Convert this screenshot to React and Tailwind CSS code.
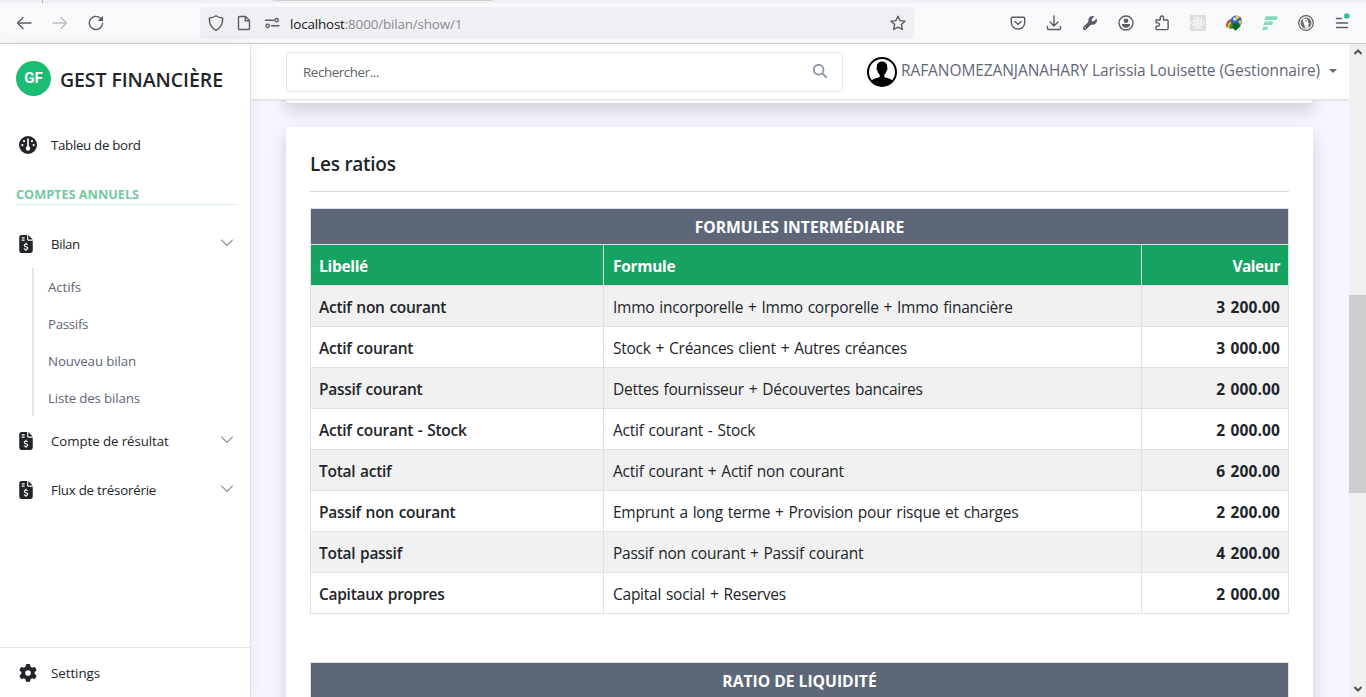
import { FaFileInvoiceDollar, FaGauge, FaGear, FaMagnifyingGlass, FaWrench, FaReact } from "react-icons/fa6";

const line = { fill: "none", stroke: "currentColor", strokeWidth: 1.4, strokeLinecap: "round", strokeLinejoin: "round" };

function Icon({ children, className = "size-4" }) {
  return (
    <svg viewBox="0 0 16 16" className={`${className} shrink-0`} {...line}>
      {children}
    </svg>
  );
}

function BrowserBar() {
  return (
    <div className="h-11 shrink-0 flex flex-col bg-[#f9f9fb] border-b border-[#cccccc] text-[#5b5b66]">
      <div className="h-[3px] shrink-0 bg-[#f0f0f4] flex">
        <div className="w-[43px] border-r border-[#b5b5b9]" />
        <div className="ml-[230px] w-[220px] h-px bg-[#cfcfd4]" />
      </div>
      <div className="flex-1 flex items-center">
        <div className="flex items-center gap-5 pl-4 w-[200px]">
          <Icon><path d="M15 8H1.5M7 2.5 1.5 8 7 13.5" /></Icon>
          <Icon className="size-4 text-[#bcbcc2]"><path d="M1 8h13.500M9 2.500 14.500 8 9 13.500" /></Icon>
          <Icon>
            <path d="M14.500 8.500a6.600 6.600 0 1 1-2-5.300" />
            <path d="M15 .8v5.200H9.800z" fill="currentColor" stroke="none" />
          </Icon>
        </div>
        <div className="h-8 w-[714px] rounded bg-[#f0f0f4] flex items-center px-2">
          <Icon><path d="M8 .8c2 1.400 4.200 2 6.600 2.200.4 5.500-1.500 9.700-6.600 12.300C2.900 12.700 1 8.500 1.400 3 3.800 2.800 6 2.200 8 .8z" /></Icon>
          <Icon className="size-4 ml-3"><path d="M3.500 1.500h6l4 4v8a1 1 0 0 1-1 1h-9a1 1 0 0 1-1-1v-11a1 1 0 0 1 1-1zM9.300 1.700v4h4" /></Icon>
          <Icon className="size-4 ml-3">
            <path d="M1.500 5.200h8M7.500 10.800h7.500" />
            <circle cx="12.600" cy="5.200" r="1.700" />
            <circle cx="3.600" cy="10.800" r="1.700" />
          </Icon>
          <span className="ml-2.5 pt-[3px] flex-1 text-[13.400px] tracking-[-0.15px] text-[#8a8a92] whitespace-nowrap">
            <span className="text-[#15141a]">localhost</span>:8000/bilan/show/1
          </span>
          <Icon className="size-4"><path d="m8 1.200 2.100 4.400 4.900.6-3.600 3.400.9 4.900L8 12.100l-4.300 2.400.9-4.900L1 6.200l4.900-.6z" /></Icon>
        </div>
        <div className="ml-auto pr-4 flex items-center gap-5">
          <Icon><path d="M2.300 2.300h11.400a1 1 0 0 1 1 1v4.400a6.700 6.300 0 0 1-13.400 0V3.300a1 1 0 0 1 1-1zM5 6.500l3 2.900 3-2.900" /></Icon>
          <Icon><path d="M8 1v9.500M4 7l4 4 4-4M1.500 11.500v2a1 1 0 0 0 1 1h11a1 1 0 0 0 1-1v-2" /></Icon>
          <FaWrench className="size-4 p-px shrink-0" />
          <Icon>
            <circle cx="8" cy="8" r="7" />
            <circle cx="8" cy="5.800" r="2.300" fill="currentColor" stroke="none" />
            <path d="M3.800 9h8.400c0 2.200-2 3.700-4.200 3.700S3.800 11.200 3.800 9z" fill="currentColor" stroke="none" />
          </Icon>
          <Icon><path d="M2.200 14.600V11.300h1.600a1.700 1.700 0 0 0 0-3.400H2.200V5h4V2.700a1.700 1.700 0 0 1 3.400 0V5h3.500a1 1 0 0 1 1 1v7.600a1 1 0 0 1-1 1z" /></Icon>
          <div className="size-4 bg-[#dedede] flex items-center justify-center"><FaReact className="size-3.5 text-white" /></div>
          <svg viewBox="0 0 16 16" className="size-4 shrink-0">
            <path d="M.2 12C-.5 7 3 3.500 7 4l2 7-4 3z" fill="#c9362b" />
            <path d="M1.500 12.500C1.500 8 4 5.500 7 6l1 5-3 3z" fill="#f0cf3c" />
            <path d="M3 13c0-3.500 2-5.500 5-5v4l-2 2z" fill="#3a9c3a" />
            <circle cx="10.300" cy="6.300" r="5.700" fill="#2c62b8" />
            <circle cx="8.800" cy="4" r="2" fill="#b9d3ee" />
            <path d="M9.500 1c2-.6 3.500 0 4.500 1l-2 2-2 .5zM12 6l3.800-1c.2 2-.6 3.500-2 4.500z" fill="#e5c24a" />
            <path d="M6.200 8.500 13 8l-.2 2.700H15L9.500 15.800 4.500 11h3z" fill="#10691d" />
          </svg>
          <svg viewBox="0 0 16 16" className="size-4 shrink-0" fill="#7fddb9">
            <path d="M3.800 1.300H16L14.500 5H2.400zM2.800 6.500h8.700L10 10H1.300zM1.500 11.700h4.800L5 15H0z" />
          </svg>
          <svg viewBox="0 0 16 16" className="size-4 shrink-0">
            <circle cx="8" cy="8" r="7.300" fill="#fff" stroke="#5c5c5c" strokeWidth="1.200" />
            <circle cx="8" cy="8" r="5.500" fill="#6f6f6f" />
            <path d="M4.500 4.500c1.500-1.800 4.800-1.400 5.400 1.300L10 8l1.800.8-1.800.9.6 3.200-3.100.5z" fill="#fff" />
            <circle cx="7.900" cy="6" r=".7" fill="#555" />
          </svg>
          <svg viewBox="0 0 16 16" className="size-4 shrink-0 overflow-visible" {...line}>
            <path d="M2.500 3.500h4.800M2.500 8h11M2.500 12.500h11" />
            <circle cx="12.800" cy="1" r="2.800" fill="#2ac3a2" stroke="none" />
          </svg>
        </div>
      </div>
    </div>
  );
}

function Chevron() {
  return (
    <svg viewBox="0 0 12 8" className="w-3 h-2 mb-0.5 ml-auto mr-[17px] text-[#8e97a8]" fill="none" stroke="currentColor" strokeWidth="1.100" strokeLinecap="round" strokeLinejoin="round">
      <path d="m.6 1 5.400 5.500L11.400 1" />
    </svg>
  );
}

function MenuItem({ icon: I, label, tracking, chevron, iconClass = "", textClass = "pt-0.5" }) {
  return (
    <div className="h-[49px] flex items-center">
      <div className="w-[51px] pl-[19px] shrink-0"><I className={`size-[18px] ${iconClass}`} /></div>
      <span className={`text-[13.300px] whitespace-nowrap ${textClass} ${tracking}`}>{label}</span>
      {chevron && <Chevron />}
    </div>
  );
}

const subItems = [
  ["Actifs", "tracking-[-0.1px]"],
  ["Passifs", "tracking-[-0.3px]"],
  ["Nouveau bilan", "tracking-[-0.13px]"],
  ["Liste des bilans", "tracking-[-0.16px]"],
];

function Sidebar() {
  return (
    <aside className="w-[251px] shrink-0 border-r border-[#e0e1e6] bg-white flex flex-col text-[#212529] relative z-20 shadow-[0_0_16px_rgba(0,0,0,0.06)]">
      <div className="h-[68px] shrink-0 flex items-center pl-4">
        <div className="size-[35px] rounded-full bg-[#1cbc73] text-white flex items-center justify-center font-['Roboto'] font-bold text-[15px]">GF</div>
        <span className="ml-[9px] mt-[3px] text-[19.500px] leading-6 font-semibold tracking-[-0.08px] whitespace-nowrap">GEST FINANCIÈRE</span>
      </div>
      <div className="mt-[8px]"><MenuItem icon={FaGauge} label="Tableu de bord" tracking="tracking-[-0.31px]" textClass="pt-[3px]" /></div>
      <div className="ml-4 mr-[13px] mt-[15px] h-[21px] border-b border-[#d9f0e8] text-[12.700px] leading-[20px] font-bold text-[#74c9a0] whitespace-nowrap">COMPTES ANNUELS</div>
      <div className="mt-[14px]"><MenuItem icon={FaFileInvoiceDollar} iconClass="-ml-[2px]" label="Bilan" tracking="tracking-[-0.4px]" chevron /></div>
      <div className="ml-8 border-l-2 border-[#e4e4ec] h-[148px]">
        {subItems.map(([t, tr]) => (
          <div key={t} className={`h-[37px] pl-[14px] pt-0.5 flex items-center text-[13.300px] text-[#5d6778] whitespace-nowrap ${tr}`}>{t}</div>
        ))}
      </div>
      <MenuItem icon={FaFileInvoiceDollar} iconClass="-ml-[2px]" label="Compte de résultat" tracking="tracking-[-0.08px]" chevron />
      <MenuItem icon={FaFileInvoiceDollar} iconClass="-ml-[2px]" label="Flux de trésorérie" tracking="tracking-[-0.22px]" chevron />
      <div className="mt-auto border-t border-[#e4e4e8] h-[50px]">
        <MenuItem icon={FaGear} label="Settings" tracking="tracking-[-0.04px]" />
      </div>
    </aside>
  );
}

function Header() {
  return (
    <header className="h-[56px] shrink-0 bg-white border-b border-[#e3e3e8] flex items-center pl-[35px] relative z-10 shadow-[0_1px_2px_rgba(0,0,0,0.06)]">
      <div className="w-[557px] h-10 border border-[#e6e6ec] rounded flex items-center pl-4 pr-[15px] justify-between">
        <span className="pt-[3px] text-[13.300px] tracking-[-0.38px] text-[#5b6169]">Rechercher...</span>
        <FaMagnifyingGlass className="size-[14px] mb-0.5 text-[#8492a6]" />
      </div>
      <svg viewBox="0 0 30 30" className="size-[30px] ml-6">
        <clipPath id="face"><circle cx="15" cy="15" r="13.500" /></clipPath>
        <circle cx="15" cy="15" r="14" fill="#fff" stroke="#000" strokeWidth="2" />
        <path clipPath="url(#face)" d="M15 4.500c3.500 0 5.300 2.400 5.200 6 .6.600.3 2.600-.6 3-.3 2-1.300 3.400-2.300 4.300v2.200c2.200 1.200 6 1.300 8.200 3.500V30h-21v-6.500c2.200-2.200 6-2.300 8.200-3.500v-2.200c-1-.9-2-2.300-2.300-4.300-.9-.4-1.200-2.400-.6-3-.1-3.600 1.700-6 5.200-6z" />
      </svg>
      <span className="ml-1 mb-px text-[15.500px] tracking-[-0.085px] text-[#5f6879] whitespace-nowrap">RAFANOMEZANJANAHARY Larissia Louisette (Gestionnaire)</span>
      <svg viewBox="0 0 8 4" className="ml-[9px] mb-0.5 w-2 h-1 fill-[#5f6879]"><path d="M0 0h8L4 4z" /></svg>
    </header>
  );
}

const rows = [
  ["Actif non courant", "Immo incorporelle + Immo corporelle + Immo financière", "3 200.00"],
  ["Actif courant", "Stock + Créances client + Autres créances", "3 000.00"],
  ["Passif courant", "Dettes fournisseur + Découvertes bancaires", "2 000.00"],
  ["Actif courant - Stock", "Actif courant - Stock", "2 000.00"],
  ["Total actif", "Actif courant + Actif non courant", "6 200.00"],
  ["Passif non courant", "Emprunt a long terme + Provision pour risque et charges", "2 200.00"],
  ["Total passif", "Passif non courant + Passif courant", "4 200.00"],
  ["Capitaux propres", "Capital social + Reserves", "2 000.00"],
];

const caption = "h-9 bg-[#5e6778] text-white text-[15.700px] tracking-[-0.02px] font-bold border-r border-b border-[#dee2e6] p-0 pt-0.5";

function RatioTable() {
  return (
    <table className="w-full table-fixed border-separate border-spacing-0 border-l border-t border-[#dee2e6] text-[15.500px] text-[#212529]">
      <colgroup>
        <col className="w-[293px]" />
        <col className="w-[538px]" />
        <col className="w-[147px]" />
      </colgroup>
      <thead>
        <tr><th colSpan={3} className={caption}>FORMULES INTERMÉDIAIRE</th></tr>
        <tr className="bg-[#16a361] text-white tracking-[-0.3px]">
          <th className="h-[41px] p-0 pl-2 pt-[4px] text-left font-bold border-r border-b border-[#dee2e6]">Libellé</th>
          <th className="p-0 pl-[9px] pt-[4px] text-left font-bold border-r border-b border-[#dee2e6]">Formule</th>
          <th className="p-0 pr-2 pt-[4px] text-right font-bold tracking-[-0.5px] border-r border-b border-[#dee2e6]">Valeur</th>
        </tr>
      </thead>
      <tbody>
        {rows.map(([a, b, c]) => (
          <tr key={a} className="odd:bg-[#f1f1f1] bg-white">
            <td className="h-[41px] p-0 pl-2 pt-[4px] font-semibold tracking-[-0.28px] [word-spacing:1px] border-r border-b border-[#dee2e6]">{a}</td>
            <td className="p-0 pl-[9px] pt-[4px] tracking-[-0.25px] [word-spacing:1.100px] border-r border-b border-[#dee2e6]">{b}</td>
            <td className="p-0 pr-2 pt-[4px] text-right font-bold text-[15.500px] tracking-[0.13px] [word-spacing:1px] border-r border-b border-[#dee2e6]">{c}</td>
          </tr>
        ))}
      </tbody>
    </table>
  );
}

export default function App() {
  return (
    <div className="w-[1366px] h-[697px] overflow-hidden flex flex-col font-['Open_Sans',sans-serif]">
      <BrowserBar />
      <div className="flex-1 min-h-0 flex">
        <Sidebar />
        <div className="flex-1 min-w-0 flex flex-col bg-[#f5f5ff] overflow-hidden">
          <Header />
          <div className="flex-1 min-h-0 pl-[35px] pr-9">
            <div className="-mt-[57px] h-[60px] bg-white rounded shadow-[0_8px_16px_rgba(0,0,0,0.15)]" />
            <section className="mt-6 h-[620px] bg-white rounded px-6 shadow-[0_8px_16px_rgba(0,0,0,0.15)]">
              <div className="h-[65px] pt-[11px] border-b border-[#d5d7dd] flex items-center text-[19px] font-semibold tracking-[-0.27px] text-[#212529]">Les ratios</div>
              <div className="pt-4"><RatioTable /></div>
              <table className="mt-12 w-full border-separate border-spacing-0 border-l border-t border-[#dee2e6]">
                <tbody><tr><th className={caption}>RATIO DE LIQUIDITÉ</th></tr></tbody>
              </table>
            </section>
          </div>
        </div>
        <div className="w-[17px] shrink-0 bg-[#f0f0f0] flex flex-col items-center text-[#505050]">
          <svg viewBox="0 0 8 6" className="w-2 h-1.5 mt-[5px]" fill="none" stroke="currentColor" strokeWidth="2"><path d="M.5 5 4 1.500 7.500 5" /></svg>
          <div className="mt-[240px] w-full h-[198px] bg-[#cdcdcd]" />
          <svg viewBox="0 0 8 6" className="w-2 h-1.5 mt-auto mb-[5px]" fill="none" stroke="currentColor" strokeWidth="2"><path d="M.5 1 4 4.500 7.500 1" /></svg>
        </div>
      </div>
    </div>
  );
}
